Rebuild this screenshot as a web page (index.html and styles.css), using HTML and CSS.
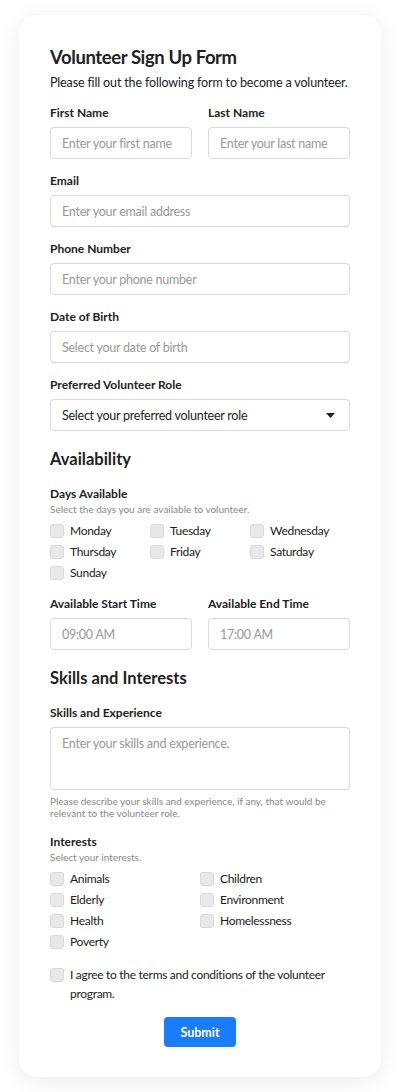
FILE: index.html
```html
<!DOCTYPE html>
<html lang="en">
  <head>
    <meta charset="UTF-8" />
    <meta name="viewport" content="width=device-width, initial-scale=1.0" />
    <title>Volunteer Sign Up Form</title>
    <link rel="stylesheet" href="styles.css">
  </head>
  <body>
    <form class="card">
      <h1>Volunteer Sign Up Form</h1>
      <p class="intro">Please fill out the following form to become a volunteer.</p>

      <div class="row">
        <div class="field">
          <label>First Name</label>
          <input type="text" placeholder="Enter your first name" />
        </div>
        <div class="field">
          <label>Last Name</label>
          <input type="text" placeholder="Enter your last name" />
        </div>
      </div>

      <div class="field">
        <label>Email</label>
        <input type="email" placeholder="Enter your email address" />
      </div>

      <div class="field">
        <label>Phone Number</label>
        <input type="tel" placeholder="Enter your phone number" />
      </div>

      <div class="field">
        <label>Date of Birth</label>
        <input type="text" placeholder="Select your date of birth" />
      </div>

      <div class="field">
        <label>Preferred Volunteer Role</label>
        <div class="select">
          <span>Select your preferred volunteer role</span>
          <svg width="9" height="5" viewBox="0 0 9 5"><path d="M0 0h9L4.5 5z" fill="#222"/></svg>
        </div>
      </div>

      <h2>Availability</h2>

      <div class="group">
        <label>Days Available</label>
        <p class="hint">Select the days you are available to volunteer.</p>
        <div class="checks days">
          <label class="check"><span class="box"></span>Monday</label>
          <label class="check"><span class="box"></span>Tuesday</label>
          <label class="check"><span class="box"></span>Wednesday</label>
          <label class="check"><span class="box"></span>Thursday</label>
          <label class="check"><span class="box"></span>Friday</label>
          <label class="check"><span class="box"></span>Saturday</label>
          <label class="check"><span class="box"></span>Sunday</label>
        </div>
      </div>

      <div class="row">
        <div class="field">
          <label>Available Start Time</label>
          <input type="text" placeholder="09:00 AM" />
        </div>
        <div class="field">
          <label>Available End Time</label>
          <input type="text" placeholder="17:00 AM" />
        </div>
      </div>

      <h2>Skills and Interests</h2>

      <div class="field">
        <label>Skills and Experience</label>
        <textarea placeholder="Enter your skills and experience."></textarea>
        <p class="help">Please describe your skills and experience, if any, that would be relevant to the volunteer role.</p>
      </div>

      <div class="group">
        <label>Interests</label>
        <p class="hint">Select your interests.</p>
        <div class="checks interests">
          <label class="check"><span class="box"></span>Animals</label>
          <label class="check"><span class="box"></span>Children</label>
          <label class="check"><span class="box"></span>Elderly</label>
          <label class="check"><span class="box"></span>Environment</label>
          <label class="check"><span class="box"></span>Health</label>
          <label class="check"><span class="box"></span>Homelessness</label>
          <label class="check"><span class="box"></span>Poverty</label>
        </div>
      </div>

      <label class="agree"><span class="box"></span>I agree to the terms and conditions of the volunteer program.</label>

      <div class="actions">
        <button type="button" class="btn">Submit</button>
      </div>
    </form>
  </body>
</html>
```

FILE: styles.css
```css
* {
  box-sizing: border-box;
}

body {
  margin: 0;
  padding: 15px 19px;
  background-color: #fff;
  font-family: Lato, "Noto Sans", sans-serif;
  color: #222;
}

.card {
  background-color: #fff;
  border-radius: 18px;
  box-shadow: 0 4px 22px rgba(0, 0, 0, 0.08);
  padding: 30px 31px 30px;
  height: 1062px;
}

h1 {
  font-size: 18.5px;
  line-height: 24px;
  font-weight: 700;
  letter-spacing: -0.4px;
  margin: 0;
}

.intro {
  font-size: 12.5px;
  line-height: 18px;
  letter-spacing: -0.15px;
  margin: 5px 0 0;
  color: #222;
}

h2 {
  font-size: 16.5px;
  line-height: 22px;
  font-weight: 700;
  margin: 17px 0 0;
}

.row {
  display: grid;
  grid-template-columns: 1fr 1fr;
  gap: 16px;
  margin-top: 13px;
}

.field {
  margin-top: 14px;
}

h2 + .field {
  margin-top: 16px;
}

.row .field {
  margin-top: 0;
  min-width: 0;
}

.field > label,
.group > label {
  display: block;
  font-size: 12px;
  line-height: 16px;
  font-weight: 700;
  margin-bottom: 6px;
}

.group {
  margin-top: 16px;
}

.field + .group {
  margin-top: 15px;
}

.group > label {
  margin-bottom: 0;
}

input,
textarea,
.select {
  display: block;
  width: 100%;
  height: 32px;
  border: 1px solid #d9d9d9;
  border-radius: 4px;
  padding: 0 11px;
  font-family: inherit;
  font-size: 12.5px;
  letter-spacing: -0.25px;
  color: #222;
  background: #fff;
}

input::placeholder,
textarea::placeholder {
  color: #999;
}

textarea {
  height: 63px;
  padding-top: 8px;
  resize: none;
}

.select {
  display: flex;
  align-items: center;
  justify-content: space-between;
  padding-right: 14px;
}

.hint {
  font-size: 10px;
  line-height: 13px;
  color: #888;
  margin: 1px 0 0;
}

.help {
  font-size: 10px;
  line-height: 12px;
  color: #888;
  margin: 5px 0 0;
}

.checks {
  display: grid;
  margin-top: 4px;
}

.days {
  grid-template-columns: repeat(3, 100px);
}

.interests {
  grid-template-columns: repeat(2, 150px);
}

.check {
  display: flex;
  align-items: center;
  gap: 6px;
  height: 21px;
  font-size: 12px;
  letter-spacing: -0.3px;
  color: #222;
}

.box {
  flex: none;
  width: 14px;
  height: 14px;
  background-color: #e8e8e8;
  border: 1px solid #dadada;
  border-radius: 3px;
}

.agree {
  display: flex;
  align-items: flex-start;
  gap: 6px;
  margin-top: 13px;
  font-size: 12px;
  letter-spacing: -0.3px;
  line-height: 19px;
  color: #222;
}

.agree .box {
  margin-top: 2.5px;
}

.actions {
  display: flex;
  justify-content: center;
  margin-top: 14px;
}

.btn {
  width: 72px;
  height: 30px;
  background-color: #1a7cff;
  color: #fff;
  border: none;
  border-radius: 4px;
  font-family: inherit;
  font-size: 12.5px;
  font-weight: 700;
  cursor: pointer;
}
```
